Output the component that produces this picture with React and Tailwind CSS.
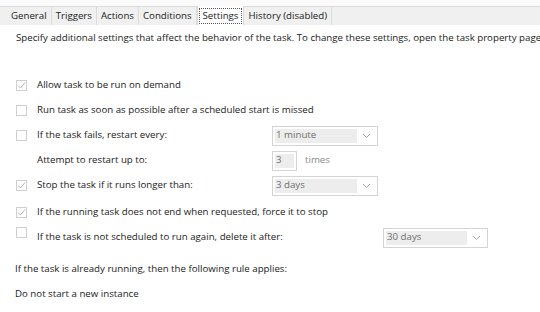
import React from 'react';

const tabs = ['General', 'Triggers', 'Actions', 'Conditions', 'Settings', 'History (disabled)'];

const Check = ({ checked }) => (
  <span className="flex h-[11px] w-[11px] shrink-0 items-center justify-center border border-[#cfcfcf] bg-white">
    {checked && (
      <svg width="9" height="9" viewBox="0 0 9 9">
        <path d="M1 4.5 L3.5 7 L8 1.5" fill="none" stroke="#b5b5b5" strokeWidth="1" />
      </svg>
    )}
  </span>
);

const Select = ({ value, width }) => (
  <div className={`flex h-[20px] ${width} items-center border border-[#d4d4d4] bg-white p-[2px]`}>
    <div className="flex h-full flex-1 items-center bg-[#ededed] pl-[1px] text-[#6d6d6d]">{value}</div>
    <svg width="16" height="10" viewBox="0 0 16 10" className="ml-[2px]">
      <path d="M4 3 L7.5 6.5 L11 3" fill="none" stroke="#a8a8a8" strokeWidth="1" />
    </svg>
  </div>
);

const Row = ({ checked, box = true, label, children, className = '' }) => (
  <div className={`flex h-[25px] items-center ${className}`}>
    <div className="flex w-[21px] items-center">{box && <Check checked={checked} />}</div>
    <span className="w-[235px] whitespace-nowrap">{label}</span>
    {children}
  </div>
);

export default function App() {
  return (
    <div
      className="relative h-[312px] w-[540px] overflow-hidden bg-white text-[9.7px] text-[#1a1a1a]"
      style={{ fontFamily: '"Open Sans", "Noto Sans", sans-serif' }}
    >
      <div className="h-[7px] border-b border-[#dadada] bg-[#fbfbfb]" />
      <div className="flex h-[calc(100%-8px)]">
        <div className="w-[3px] bg-[#a3a3a3]" />
        <div className="flex-1">
          <div className="flex h-[18px] items-stretch bg-[#f0f0f0] pl-[7px]">
            {tabs.map((t) =>
              t === 'Settings' ? (
                <div key={t} className="mt-[-1px] flex items-center border-x border-[#d9d9d9] bg-white px-[1px]">
                  <span className="border border-dotted border-[#555] px-[3px] leading-[14px]">{t}</span>
                </div>
              ) : (
                <div key={t} className="flex items-center border-r border-[#dcdcdc] px-[4px]">
                  {t}
                </div>
              )
            )}
          </div>
          <div className="pl-[16px] pt-[2px]">
            <div className="whitespace-nowrap leading-[22px]">
              Specify additional settings that affect the behavior of the task. To change these settings, open the task property pages using the Properties command.
            </div>
            <div className="h-[24px]" />
            <Row checked label="Allow task to be run on demand" />
            <Row label="Run task as soon as possible after a scheduled start is missed" />
            <Row label="If the task fails, restart every:">
              <Select value="1 minute" width="w-[106px]" />
            </Row>
            <Row box={false} label="Attempt to restart up to:">
              <div className="flex h-[20px] w-[25px] items-center border border-[#d4d4d4] bg-white p-[2px]">
                <div className="flex h-full flex-1 items-center bg-[#ededed] pl-[1px] text-[#6d6d6d]">3</div>
              </div>
              <span className="ml-[8px] text-[#8a8a8a]">times</span>
            </Row>
            <Row checked label="Stop the task if it runs longer than:">
              <Select value="3 days" width="w-[106px]" />
            </Row>
            <div className="h-[2px]" />
            <Row checked label="If the running task does not end when requested, force it to stop" />
            <div className="flex h-[25px] items-center">
              <div className="flex w-[21px] self-start pt-[2px]"><Check /></div>
              <span className="w-[346px] whitespace-nowrap">If the task is not scheduled to run again, delete it after:</span>
              <Select value="30 days" width="w-[105px]" />
            </div>
            <div className="h-[6px]" />
            <div className="ml-[-1px] leading-[25px]">If the task is already running, then the following rule applies:</div>
            <div className="ml-[-1px] leading-[25px]">Do not start a new instance</div>
          </div>
        </div>
      </div>
    </div>
  );
}
